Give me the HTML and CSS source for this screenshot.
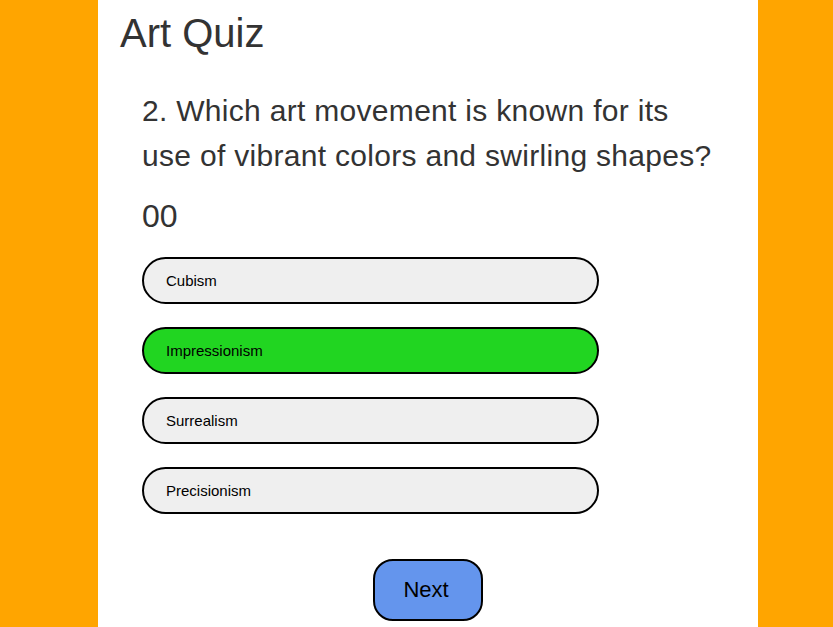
FILE: index.html
```html
<!DOCTYPE html>
<html>
<head>
<meta charset="utf-8">
<link rel="stylesheet" href="styles.css">
</head>
<body>
<div class="app">
  <h1 class="title">Art Quiz</h1>
  <div class="quiz">
    <h2 class="question">2. Which art movement is known for its use of vibrant colors and swirling shapes?</h2>
    <div class="timer">00</div>
    <div class="answers">
      <button class="answer">Cubism</button>
      <button class="answer correct">Impressionism</button>
      <button class="answer">Surrealism</button>
      <button class="answer">Precisionism</button>
    </div>
    <div class="actions">
      <button class="next">Next</button>
    </div>
  </div>
</div>
</body>
</html>
```
FILE: styles.css
```css
html, body {
  margin: 0;
  padding: 0;
  height: 100%;
}
body {
  background: #ffa500;
  font-family: "Liberation Sans", Arial, sans-serif;
  color: #333;
  overflow: hidden;
}
.app {
  background: #fff;
  width: 660px;
  min-height: 100%;
  margin-left: 98px;
  padding: 10px 22px 0;
  box-sizing: border-box;
}
.title {
  margin: 0;
  font-size: 40px;
  font-weight: normal;
  line-height: 46px;
}
.quiz {
  padding: 32px 22px 0;
}
.question {
  margin: 0;
  font-size: 30px;
  font-weight: normal;
  line-height: 45px;
  letter-spacing: 0.3px;
}
.timer {
  margin-top: 20px;
  font-size: 32px;
  line-height: 37px;
}
.answers {
  margin-top: 22px;
  display: flex;
  flex-direction: column;
  gap: 23px;
}
.answer {
  width: 457px;
  height: 47px;
  box-sizing: border-box;
  border: 2px solid #000;
  border-radius: 24px;
  background: #efefef;
  font-family: "Liberation Sans", Arial, sans-serif;
  font-size: 15px;
  color: #000;
  text-align: left;
  padding: 0 22px;
}
.answer.correct {
  background: #21d521;
}
.actions {
  display: flex;
  justify-content: center;
  margin-top: 45px;
}
.next {
  width: 110px;
  height: 62px;
  box-sizing: border-box;
  border: 2px solid #000;
  border-radius: 20px;
  background: #6495ed;
  font-family: "Liberation Sans", Arial, sans-serif;
  font-size: 22px;
  color: #000;
  padding: 0 4px 0 0;
}
```
